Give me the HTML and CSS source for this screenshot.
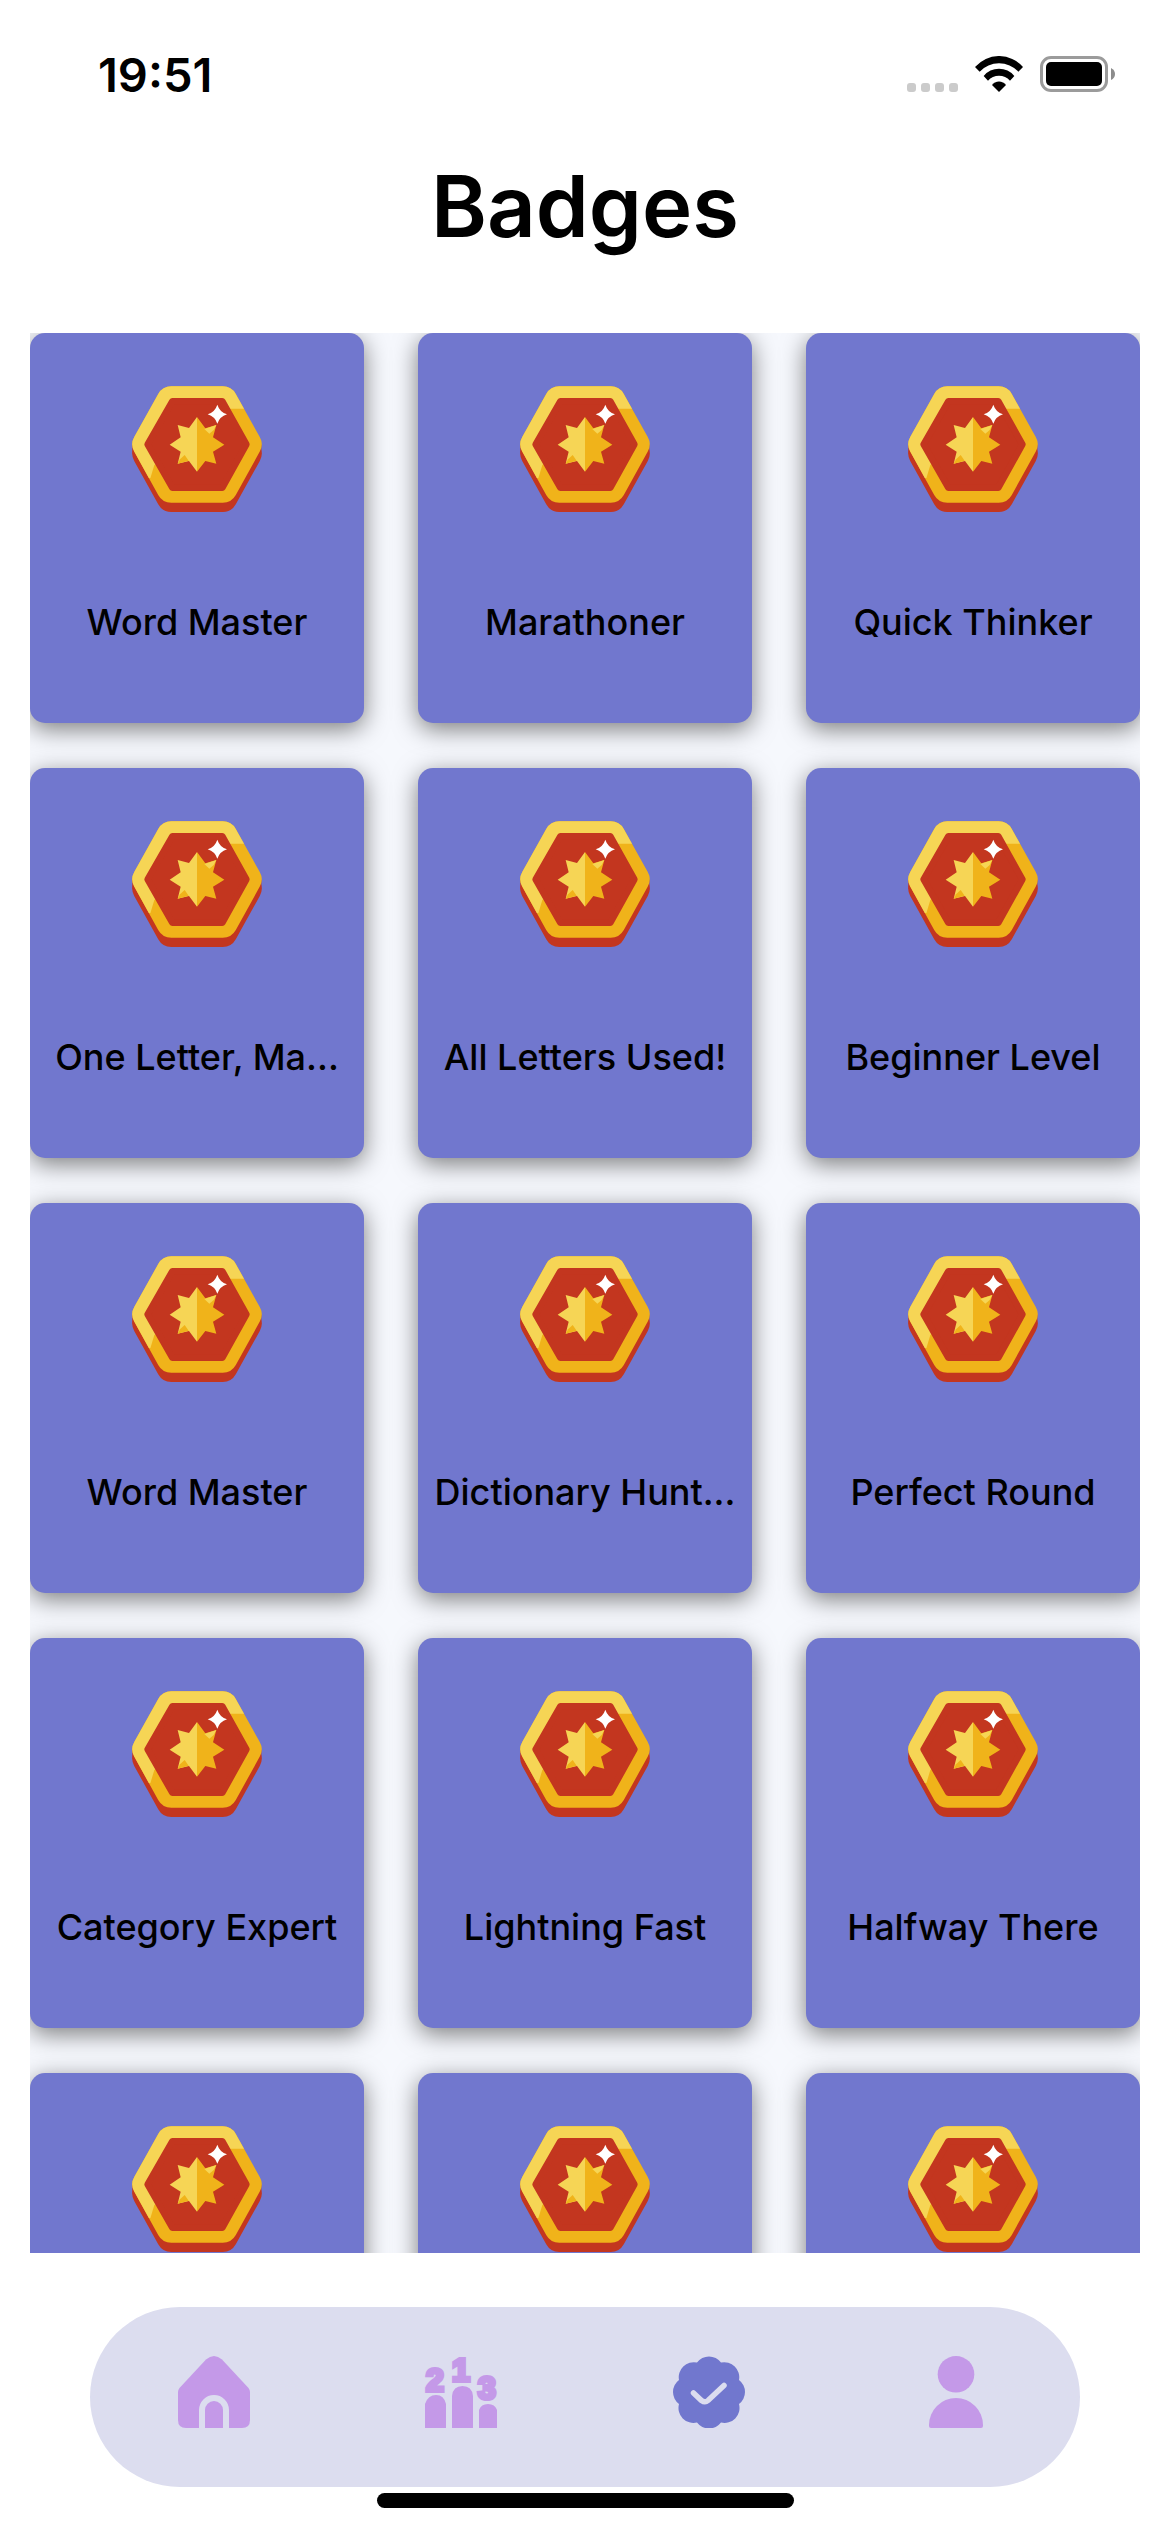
FILE: index.html
```html
<!DOCTYPE html>
<html lang="en">
<head>
<meta charset="utf-8">
<meta name="viewport" content="width=device-width, initial-scale=1">
<title>Badges</title>
<link rel="stylesheet" href="styles.css">
</head>
<body>
<svg class="defs" width="0" height="0" aria-hidden="true">
  <defs>
    <clipPath id="shine"><path d="M0 0H510V131H360L133 300L121 340H0Z"/></clipPath>
    <symbol id="medal" viewBox="36 30 450 450">
      <g stroke-width="90" stroke-linejoin="round">
        <path fill="#c3361f" stroke="#c3361f" d="M112 266L184 137H338L410 266L338 396H184Z"/>
        <rect x="67" y="238" width="387" height="28" fill="#c3361f"/>
        <path fill="#f0b31a" stroke="#f0b31a" d="M112 238L184 109H338L410 238L338 368H184Z"/>
        <path clip-path="url(#shine)" fill="#f6d555" stroke="#f6d555" d="M112 238L184 109H338L410 238L338 368H184Z"/>
      </g>
      <path fill="#c3361f" stroke="#c3361f" stroke-width="20" stroke-linejoin="round" d="M113 238L187 109H337L409 238L337 368H187Z"/>
      <path fill="#f6d555" d="M261 156L237 189L203 180L212 217L179 239L212 260L203 296L237 288L261 320Z"/>
      <path fill="#f0b31a" d="M261 156L286 190L319 180L309 217L343 239L309 260L319 296L286 288L261 320Z"/>
      <path fill="#f6d555" d="M283 192L319 180L311 195L298 206Z"/>
      <path fill="#f0b31a" d="M210 283L224 270L236 287L203 296Z"/>
      <path fill="#fff" d="M322 119Q329 141 351 148Q329 155 322 176Q315 155 293 148Q315 141 322 119Z"/>
    </symbol>
  </defs>
</svg>

<div class="screen">
  <header class="status">
    <time class="clock">19:51</time>
    <div class="indicators">
      <svg class="signal" viewBox="0 0 51 9" aria-label="No signal" role="img" fill="#cbcbcb">
        <rect width="9" height="9" rx="3"/><rect x="14" width="9" height="9" rx="3"/><rect x="28" width="9" height="9" rx="3"/><rect x="42" width="9" height="9" rx="3"/>
      </svg>
      <svg class="wifi" viewBox="345 75 144 108" aria-label="Wi-Fi" role="img">
        <path d="M345 108A95 95 0 0 1 489 108L475 122A80 80 0 0 0 359 122Z"/>
        <path d="M371 135A59 59 0 0 1 463 135L450 149A44 44 0 0 0 384 149Z"/>
        <path d="M396 162A26 26 0 0 1 438 162L417 183Z"/>
      </svg>
      <svg class="battery" viewBox="0 0 75 36" aria-label="Battery full" role="img">
        <rect x="1.5" y="1.5" width="65" height="33" rx="9.5" fill="none" stroke="#9b9b9b" stroke-width="3"/>
        <rect x="6" y="6" width="56" height="24" rx="5"/>
        <path fill="#8c8c8c" d="M71 12Q75 14 75 18T71 24Z"/>
      </svg>
    </div>
  </header>

  <h1 class="title">Badges</h1>

  <main class="list">
    <ul class="grid">
      <li class="card"><svg class="medal" aria-hidden="true"><use href="#medal"/></svg><span class="name">Word Master</span></li>
      <li class="card"><svg class="medal" aria-hidden="true"><use href="#medal"/></svg><span class="name">Marathoner</span></li>
      <li class="card"><svg class="medal" aria-hidden="true"><use href="#medal"/></svg><span class="name">Quick Thinker</span></li>
      <li class="card"><svg class="medal" aria-hidden="true"><use href="#medal"/></svg><span class="name">One Letter, Ma...</span></li>
      <li class="card"><svg class="medal" aria-hidden="true"><use href="#medal"/></svg><span class="name">All Letters Used!</span></li>
      <li class="card"><svg class="medal" aria-hidden="true"><use href="#medal"/></svg><span class="name">Beginner Level</span></li>
      <li class="card"><svg class="medal" aria-hidden="true"><use href="#medal"/></svg><span class="name">Word Master</span></li>
      <li class="card"><svg class="medal" aria-hidden="true"><use href="#medal"/></svg><span class="name">Dictionary Hunt...</span></li>
      <li class="card"><svg class="medal" aria-hidden="true"><use href="#medal"/></svg><span class="name">Perfect Round</span></li>
      <li class="card"><svg class="medal" aria-hidden="true"><use href="#medal"/></svg><span class="name">Category Expert</span></li>
      <li class="card"><svg class="medal" aria-hidden="true"><use href="#medal"/></svg><span class="name">Lightning Fast</span></li>
      <li class="card"><svg class="medal" aria-hidden="true"><use href="#medal"/></svg><span class="name">Halfway There</span></li>
      <li class="card"><svg class="medal" aria-hidden="true"><use href="#medal"/></svg></li>
      <li class="card"><svg class="medal" aria-hidden="true"><use href="#medal"/></svg></li>
      <li class="card"><svg class="medal" aria-hidden="true"><use href="#medal"/></svg></li>
    </ul>
  </main>

  <nav class="tabs" aria-label="Main">
    <a class="tab" href="#home" aria-label="Home">
      <svg class="icon" viewBox="0 0 72 72">
        <path fill="currentColor" d="M28 3.500Q36 -3.500 44 3.500L70.500 32Q72 34 72 36V64Q72 72 64 72H8Q0 72 0 64V36Q0 34 1.500 32Z"/>
        <path class="cut" stroke-width="6" d="M24 73V54A12 12 0 0 1 48 54V73"/>
      </svg>
    </a>
    <a class="tab" href="#ranking" aria-label="Ranking">
      <svg class="icon podium" viewBox="0 0 72 72" fill="currentColor">
        <g class="places" aria-hidden="true">
          <text x="10" y="35">2</text><text x="36" y="25">1</text><text x="62" y="43">3</text>
        </g>
        <path d="M0 72V48Q3 39 11 39T21 48V72ZM27 72V40Q28 30 37.500 30T48 40V72ZM54 72V54Q56 48 63 48T72 54V72Z"/>
      </svg>
    </a>
    <a class="tab active" href="#badges" aria-label="Badges" aria-current="page">
      <svg class="icon" viewBox="0 0 72 72">
        <path fill="currentColor" d="M24 6.500A15 15 0 0 1 48 6.500A15 15 0 0 1 66 24A15 15 0 0 1 66 48A15 15 0 0 1 48 66.500A15 15 0 0 1 24 66.500A15 15 0 0 1 6 48A15 15 0 0 1 6 24A15 15 0 0 1 24 6.500Z"/>
        <path class="cut" stroke-width="5.500" stroke-linecap="round" d="M20.500 37L28.500 44.500Q32 47 35 44.500L51 29.500"/>
      </svg>
    </a>
    <a class="tab" href="#profile" aria-label="Profile">
      <svg class="icon" viewBox="0 0 72 72" fill="currentColor">
        <circle cx="36" cy="18.300" r="18.300"/>
        <path d="M9 69A27 27 0 0 1 63 69V70Q63 72 61 72H11Q9 72 9 70Z"/>
      </svg>
    </a>
  </nav>
  <div class="home-indicator"></div>
</div>
</body>
</html>
```

FILE: styles.css
```css
* {
  box-sizing: border-box;
}

body {
  margin: 0;
  background: #fff;
  color: #000;
  font-family: Inter, "Liberation Sans", sans-serif;
}

.defs {
  position: absolute;
}

.screen {
  display: flex;
  flex-direction: column;
  height: 100vh;
}

.status {
  display: flex;
  align-items: center;
  justify-content: space-between;
  height: 148px;
  padding: 0 55px 0 98px;
}

.clock {
  font-size: 47px;
  font-weight: 600;
}

.indicators {
  display: flex;
  align-items: flex-end;
  gap: 17px;
}

.signal {
  width: 51px;
  height: 9px;
}

.wifi {
  width: 48px;
  height: 36px;
}

.battery {
  width: 75px;
  height: 36px;
}

.title {
  margin: 0 0 67px;
  font-size: 85px;
  font-weight: 600;
  line-height: 118px;
  text-align: center;
}

.list {
  flex: 1;
  min-height: 0;
  margin: 0 30px;
  overflow: hidden;
  background: #f6f8fd;
}

.grid {
  display: grid;
  grid-template-columns: repeat(3, 1fr);
  gap: 45px 54px;
  margin: 0;
  padding: 0;
  list-style: none;
}

.card {
  display: flex;
  flex-direction: column;
  align-items: center;
  gap: 75px;
  min-height: 390px;
  padding: 42px 12px;
  border-radius: 15px;
  background: #7177ce;
  box-shadow: 0 6px 24px rgba(0, 0, 0, 0.5);
}

.medal {
  width: 150px;
  height: 150px;
}

.name {
  font-size: 36px;
  font-weight: 500;
  line-height: 44px;
  white-space: nowrap;
}

.tabs {
  display: flex;
  height: 180px;
  margin: 54px 90px 6px;
  padding-bottom: 10px;
  border-radius: 90px;
  background: #dcddef;
}

.tab {
  display: flex;
  flex: 1;
  align-items: center;
  justify-content: center;
  color: #c499e8;
}

.tab.active {
  color: #7177ce;
}

.icon {
  width: 72px;
  height: 72px;
}

.podium {
  overflow: visible;
}

.cut {
  fill: none;
  stroke: #dcddef;
}

.places {
  font-family: "Liberation Sans", sans-serif;
  font-size: 32px;
  font-weight: 700;
  text-anchor: middle;
  stroke: currentColor;
  stroke-width: 4px;
}

.home-indicator {
  width: 417px;
  height: 15px;
  margin: 0 auto 24px;
  border-radius: 8px;
  background: #000;
}
```
